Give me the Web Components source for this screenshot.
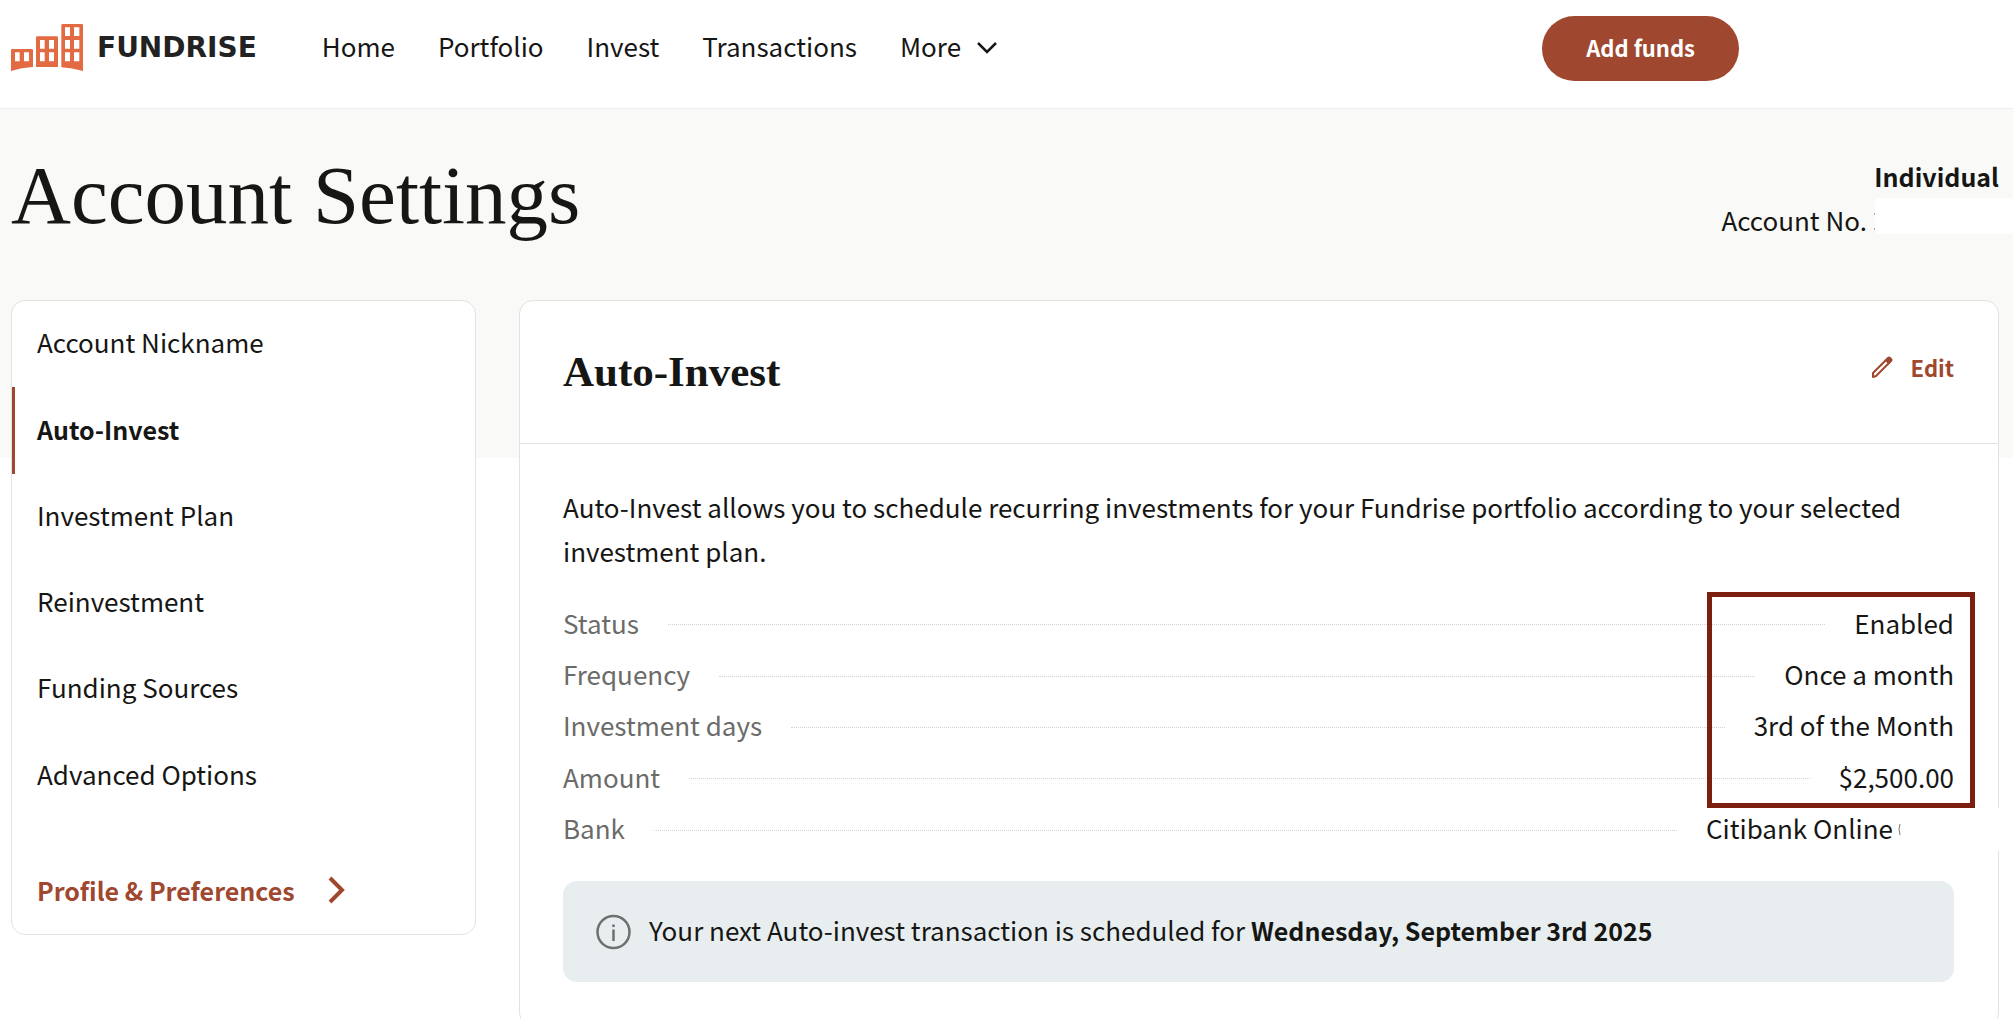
<!DOCTYPE html>
<html lang="en">
<head>
<meta charset="utf-8">
<meta name="viewport" content="width=device-width, initial-scale=1">
<title>Account Settings</title>
<style>
  :root {
    --ink: #161614;
    --muted: #6b6b69;
    --rust: #9f482f;
    --line: #e2e2e0;
    --tint: #f9f9f7;
    --serif: "Liberation Serif", "Times New Roman", serif;
  }
  body {
    margin: 0;
    background: #fff;
    color: var(--ink);
    font: 26px/44px "Noto Sans CJK SC", "Noto Sans", sans-serif;
  }
  b { font-size: 25px; }
</style>
</head>
<body>
<settings-page>
  <site-header slot="header"></site-header>
  <page-title slot="title" heading="Account Settings" account="Individual"></page-title>
  <settings-nav slot="nav"></settings-nav>
  <settings-panel slot="panel" heading="Auto-Invest">
    <p>Auto-Invest allows you to schedule recurring investments for your Fundrise portfolio according to your selected investment plan.</p>
    <detail-list></detail-list>
    <info-notice>Your next Auto-invest transaction is scheduled for <b>Wednesday, September 3rd 2025</b></info-notice>
  </settings-panel>
</settings-page>

<script>
class SettingsPage extends HTMLElement {
  constructor() {
    super();
    this.attachShadow({ mode: 'open' });
    this.shadowRoot.innerHTML = `
      <style>
        :host { display: block; height: 100vh; overflow: hidden; }
        .top {
          background: linear-gradient(var(--tint), var(--tint)) no-repeat 0 0 / 100% 349px;
        }
        main {
          display: grid;
          grid-template-columns: minmax(0, 465px) minmax(0, 1fr);
          gap: 43px;
          align-items: start;
          padding: 0 14px 40px 11px;
        }
      </style>
      <slot name="header"></slot>
      <div class="top">
        <slot name="title"></slot>
        <main>
          <slot name="nav"></slot>
          <slot name="panel"></slot>
        </main>
      </div>
    `;
  }
}
customElements.define('settings-page', SettingsPage);

class BrandLogo extends HTMLElement {
  constructor() {
    super();
    this.attachShadow({ mode: 'open' });
    this.shadowRoot.innerHTML = `
      <style>
        :host { display: block; padding-bottom: 2px; }
        a { display: flex; align-items: center; gap: 14px; color: #222; text-decoration: none; }
        span { font: 700 28px/47px "DejaVu Sans", sans-serif; }
        svg { display: block; }
      </style>
      <a href="#">
        <svg width="72" height="47" viewBox="33 72 216 141" fill="#e26b44" fill-rule="evenodd" aria-hidden="true">
          <path d="M37 147H95Q99 147 99 151V201Q64 203 33 213V151Q33 147 37 147ZM45 157V184H59V157ZM72 157V184H87V157Z"/>
          <path d="M112 109H170Q174 109 174 113V201H108V113Q108 109 112 109ZM120 120V146H134V120ZM147 120V146H162V120ZM120 157V184H134V157ZM147 157V184H162V157Z"/>
          <path d="M188 72H245Q249 72 249 76V213Q218 204 184 202V76Q184 72 188 72ZM195 82V108H210V82ZM222 82V108H238V82ZM195 120V146H210V120ZM222 120V146H238V120ZM195 157V184H210V157ZM222 157V184H238V157Z"/>
        </svg>
        <span>FUNDRISE</span>
      </a>
    `;
  }
}
customElements.define('brand-logo', BrandLogo);

class SiteHeader extends HTMLElement {
  constructor() {
    super();
    this.attachShadow({ mode: 'open' });
    this.shadowRoot.innerHTML = `
      <style>
        :host { display: block; border-bottom: 1px solid #eeeeec; }
        header {
          display: flex;
          align-items: center;
          height: 108px;
          box-sizing: border-box;
          padding: 0 274px 12px 11px;
        }
        nav { display: flex; align-items: center; gap: 43px; margin-left: 65px; }
        nav a, nav button {
          color: inherit;
          font: inherit;
          text-decoration: none;
          background: none;
          border: 0;
          padding: 0;
        }
        nav a, nav span { padding-bottom: 4px; }
        nav button { display: flex; align-items: center; gap: 16px; }
        .add {
          margin-left: auto;
          padding: 0 44px 3px;
          border: 0;
          border-radius: 33px;
          background: var(--rust);
          color: #fff;
          font: 600 22px/62px "Noto Sans CJK SC", "Noto Sans", sans-serif;
        }
      </style>
      <header>
        <brand-logo></brand-logo>
        <nav>
          <a href="#">Home</a>
          <a href="#">Portfolio</a>
          <a href="#">Invest</a>
          <a href="#">Transactions</a>
          <button type="button"><span>More</span>
            <svg width="20" height="12" viewBox="0 0 20 12" fill="none" stroke="currentColor" stroke-width="2.5" aria-hidden="true"><path d="M1 1L10 10L19 1"/></svg>
          </button>
        </nav>
        <button type="button" class="add">Add funds</button>
      </header>
    `;
  }
}
customElements.define('site-header', SiteHeader);

class PageTitle extends HTMLElement {
  constructor() {
    super();
    this.attachShadow({ mode: 'open' });
  }
  connectedCallback() {
    this.shadowRoot.innerHTML = `
      <style>
        :host {
          display: flex;
          justify-content: space-between;
          align-items: flex-start;
          height: 191px;
          box-sizing: border-box;
          padding: 46px 14px 0 11px;
        }
        h1 { margin: 0; font: 400 83px/80px var(--serif); }
        .account { text-align: right; line-height: 43px; }
        .number { display: flex; margin-right: -14px; }
        .number svg { margin-left: 6px; }
        /* account number is kept blank */
        .blank { width: 138px; height: 36px; background: #fff; }
        b { display: block; font-size: 25px; }
      </style>
      <h1>${this.getAttribute('heading')}</h1>
      <div class="account">
        <b>${this.getAttribute('account')}</b>
        <div class="number">Account No.
          <svg width="2" height="43" viewBox="0 0 2 43" fill="#aaa" aria-hidden="true"><path d="M1 15h1v2h-1zM1 30h1v2h-1z"/></svg>
          <span class="blank"></span>
        </div>
      </div>
    `;
  }
}
customElements.define('page-title', PageTitle);

class SettingsNav extends HTMLElement {
  constructor() {
    super();
    this.attachShadow({ mode: 'open' });
  }
  connectedCallback() {
    const items = ['Account Nickname', 'Auto-Invest', 'Investment Plan', 'Reinvestment', 'Funding Sources', 'Advanced Options'];
    const current = 'Auto-Invest';
    this.shadowRoot.innerHTML = `
      <style>
        :host {
          display: block;
          background: #fff;
          border: 1px solid var(--line);
          border-radius: 14px;
        }
        ul {
          display: grid;
          grid-auto-rows: 1fr;
          height: 518px;
          margin: 0;
          padding: 0;
          list-style: none;
        }
        li { display: flex; }
        a {
          flex: 1;
          display: flex;
          align-items: center;
          padding: 0 0 4px 22px;
          border-left: 3px solid transparent;
          color: inherit;
          text-decoration: none;
        }
        a[aria-current] { border-color: var(--rust); padding-bottom: 2px; font-size: 25px; font-weight: 600; }
        .profile {
          gap: 32px;
          padding: 49px 0 22px 22px;
          color: var(--rust);
          font-size: 25px;
          font-weight: 600;
        }
      </style>
      <nav>
        <ul>
          ${items.map(t => `<li><a href="#"${t === current ? ' aria-current="page"' : ''}>${t}</a></li>`).join('')}
        </ul>
        <a class="profile" href="#">Profile &amp; Preferences
          <svg width="18" height="28" viewBox="0 0 18 28" fill="none" stroke="currentColor" stroke-width="4" aria-hidden="true"><path d="M3 2L15 14L3 26"/></svg>
        </a>
      </nav>
    `;
  }
}
customElements.define('settings-nav', SettingsNav);

class SettingsPanel extends HTMLElement {
  constructor() {
    super();
    this.attachShadow({ mode: 'open' });
  }
  connectedCallback() {
    this.shadowRoot.innerHTML = `
      <style>
        :host {
          display: block;
          background: #fff;
          border: 1px solid var(--line);
          border-radius: 14px;
        }
        header {
          display: flex;
          justify-content: space-between;
          align-items: flex-start;
          padding: 44px 44px 44px 43px;
          border-bottom: 1px solid var(--line);
        }
        h2 { margin: 0; font: 700 43px/54px var(--serif); }
        button {
          display: flex;
          align-items: center;
          gap: 18px;
          padding: 0;
          border: 0;
          background: none;
          color: var(--rust);
          font: 600 22px/44px "Noto Sans CJK SC", "Noto Sans", sans-serif;
        }
        .body { padding: 41px 44px 44px 43px; }
        ::slotted(p) { margin: 0 0 26px; }
      </style>
      <header>
        <h2>${this.getAttribute('heading')}</h2>
        <button type="button">
          <svg width="22" height="22" viewBox="0 0 22 22" fill="none" stroke="currentColor" stroke-width="2" stroke-linejoin="round" aria-hidden="true">
            <path d="M2 21V17L15 4L18 7L5 20Z"/>
            <path d="M15 4L17 2Q18 1 19 2L20 3Q21 4 20 5L18 7Z" fill="currentColor"/>
          </svg>
          Edit
        </button>
      </header>
      <div class="body"><slot></slot></div>
    `;
  }
}
customElements.define('settings-panel', SettingsPanel);

class DetailList extends HTMLElement {
  constructor() {
    super();
    this.attachShadow({ mode: 'open' });
  }
  connectedCallback() {
    const rows = [
      ['Status', 'Enabled'],
      ['Frequency', 'Once a month'],
      ['Investment days', '3rd of the Month'],
      ['Amount', '$2,500.00'],
      ['Bank', 'Citibank Online', 'bank']
    ];
    this.shadowRoot.innerHTML = `
      <style>
        :host { display: block; position: relative; }
        dl { display: grid; grid-auto-rows: 1fr; height: 257px; margin: 0; }
        .row { display: flex; align-items: center; gap: 29px; position: relative; }
        .row::before { content: ""; order: 1; flex: 1; border-top: 1px dotted #d4d4d2; }
        dt, dd { padding-bottom: 4px; }
        dt { color: var(--muted); }
        dd { order: 2; margin: 0; }
        .bank dd { width: 248px; }
        /* hides the end of the bank name */
        .mask { position: absolute; top: 3px; right: -59px; width: 115px; height: 43px; background: #fff; }
        .mask svg { display: block; }
        .highlight {
          position: absolute;
          top: -7px;
          right: -21px;
          width: 268px;
          height: 216px;
          box-sizing: border-box;
          border: 5px solid #7d1f10;
        }
      </style>
      <dl>
        ${rows.map(([label, value, name = '']) => `
          <div class="row ${name}">
            <dt>${label}</dt>
            <dd>${value}</dd>
            ${name ? '<div class="mask"><svg width="3" height="43" viewBox="0 0 3 43" fill="none" stroke="#777" aria-hidden="true"><path d="M2 16Q0 21 2 27"/></svg></div>' : ''}
          </div>`).join('')}
      </dl>
      <div class="highlight"></div>
    `;
  }
}
customElements.define('detail-list', DetailList);

class InfoNotice extends HTMLElement {
  constructor() {
    super();
    this.attachShadow({ mode: 'open' });
    this.shadowRoot.innerHTML = `
      <style>
        :host {
          display: flex;
          align-items: center;
          gap: 18px;
          margin-top: 25px;
          padding: 27px 32px 26px;
          border-radius: 14px;
          background: #e8eef0;
        }
        svg { flex: none; }
        span { padding-bottom: 4px; }
      </style>
      <svg width="36" height="36" viewBox="0 0 36 36" fill="none" stroke="#6f6f6f" stroke-width="2.5" aria-hidden="true">
        <circle cx="18.5" cy="18" r="16"/>
        <path d="M18.5 15.5V27M18.5 10.5V13"/>
      </svg>
      <span><slot></slot></span>
    `;
  }
}
customElements.define('info-notice', InfoNotice);
</script>
</body>
</html>
